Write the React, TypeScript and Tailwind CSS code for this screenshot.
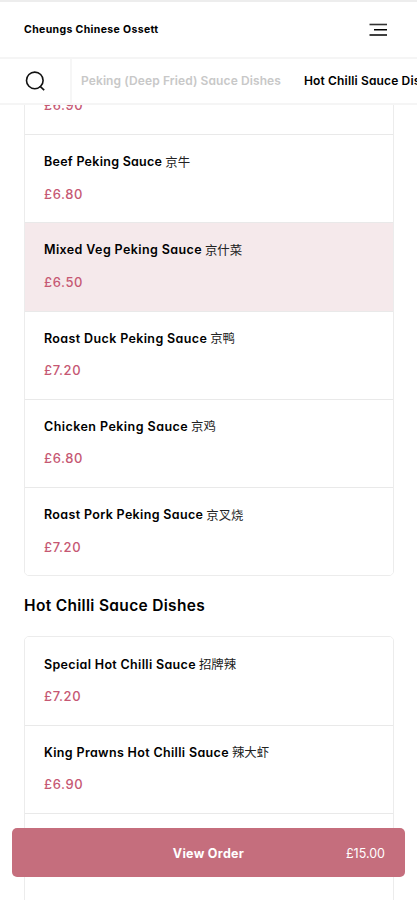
type Dish = { name: string; zh: string; price: string; tracking: string; selected?: boolean };

const peking: Dish[] = [
  { name: "King Prawns Peking Sauce", zh: "京大虾", price: "£6.90", tracking: "tracking-[0.35px]" },
  { name: "Beef Peking Sauce", zh: "京牛", price: "£6.80", tracking: "tracking-[0.27px]" },
  { name: "Mixed Veg Peking Sauce", zh: "京什菜", price: "£6.50", tracking: "tracking-[0.39px]", selected: true },
  { name: "Roast Duck Peking Sauce", zh: "京鸭", price: "£7.20", tracking: "tracking-[0.37px]" },
  { name: "Chicken Peking Sauce", zh: "京鸡", price: "£6.80", tracking: "tracking-[0.45px]" },
  { name: "Roast Pork Peking Sauce", zh: "京叉烧", price: "£7.20", tracking: "tracking-[0.34px]" },
];

const chilli: Dish[] = [
  { name: "Special Hot Chilli Sauce", zh: "招牌辣", price: "£7.20", tracking: "tracking-[0.33px]" },
  { name: "King Prawns Hot Chilli Sauce", zh: "辣大虾", price: "£6.90", tracking: "tracking-[0.34px]" },
];

function DishList({ dishes, continues = false }: { dishes: Dish[]; continues?: boolean }) {
  return (
    <ul className="overflow-hidden rounded-[5px] border border-[#ececec]">
      {dishes.map((d) => (
        <li
          key={d.name}
          className={`h-[88.3px] border-[#e9e9e9] pt-[16.6px] pl-[19px] not-last:border-b last:h-[87.3px] ${d.selected ? "bg-[#f5e9eb]" : "bg-white"}`}
        >
          <div className="flex h-[22px] items-center gap-[3px] whitespace-nowrap text-black">
            <span className={`text-[12.5px] font-semibold ${d.tracking}`}>{d.name}</span>
            <span className="-mt-[2px] font-['Noto_Sans_CJK_SC',sans-serif] text-[12.4px] leading-[22px] text-[#222]">{d.zh}</span>
          </div>
          <div className="mt-[9px] h-[22px] text-[13px] leading-[22px] font-medium tracking-[0.6px] text-[#c65873]">{d.price}</div>
        </li>
      ))}
      {continues && <li className="h-[110px] bg-white" />}
    </ul>
  );
}

export default function App() {
  return (
    <div className="relative flex h-[900px] w-[417px] flex-col overflow-hidden bg-white font-[Inter,'Noto_Sans_CJK_SC',sans-serif] [font-feature-settings:'cv11']">
      <header className="flex h-[59px] shrink-0 items-center justify-between border-t-2 border-b-2 border-t-[#ededed] border-b-[#f5f5f5] pr-[30px] pl-[24px]">
        <h1 className="text-[10.5px] font-bold tracking-[0.36px] whitespace-nowrap text-black">Cheungs Chinese Ossett</h1>
        <svg width="18" height="14" viewBox="0 0 18 14" stroke="#000" strokeWidth="1.6">
          <path d="M0.5 1.5H18" stroke="#333" />
          <path d="M5 6.7H18M0.5 12H18" />
        </svg>
      </header>
      <nav className="flex h-[46px] shrink-0 items-stretch border-b-2 border-[#f5f5f5]">
        <button className="flex w-[72px] shrink-0 items-center border-r-2 border-[#f6f6f6] pl-[25px]" aria-label="Search">
          <svg width="20" height="20" viewBox="0 0 20 20" fill="none" stroke="#111" strokeWidth="1.6">
            <circle cx="9.8" cy="9.4" r="8.3" />
            <path d="M14.8 15.2L19.2 19.2" />
          </svg>
        </button>
        <div className="flex flex-1 items-center gap-[23px] overflow-hidden pl-[9px] text-[12px] font-semibold whitespace-nowrap">
          <span className="shrink-0 tracking-[0.1px] text-[#c8c8c8]">Peking (Deep Fried) Sauce Dishes</span>
          <span className="shrink-0 tracking-[0.15px] text-black">Hot Chilli Sauce Dishes</span>
        </div>
      </nav>
      <main className="min-h-0 flex-1 overflow-hidden pr-[23px] pl-[24px]">
        <div className="-mt-[59.4px]">
          <DishList dishes={peking} />
          <h2 className="flex h-[60px] items-center pb-[2px] text-[15.5px] font-semibold tracking-[0.32px] whitespace-nowrap text-black">Hot Chilli Sauce Dishes</h2>
          <DishList dishes={chilli} continues />
        </div>
      </main>
      <button className="absolute top-[828px] left-[12px] grid h-[49px] w-[393px] grid-cols-3 items-center rounded-[5px] bg-[#c56e7d] text-white">
        <span className="col-start-2 pt-[3px] text-center text-[12.5px] font-bold tracking-[0.3px]">View Order</span>
        <span className="pt-[3px] pr-[20px] text-right text-[12.5px]">£15.00</span>
      </button>
    </div>
  );
}
